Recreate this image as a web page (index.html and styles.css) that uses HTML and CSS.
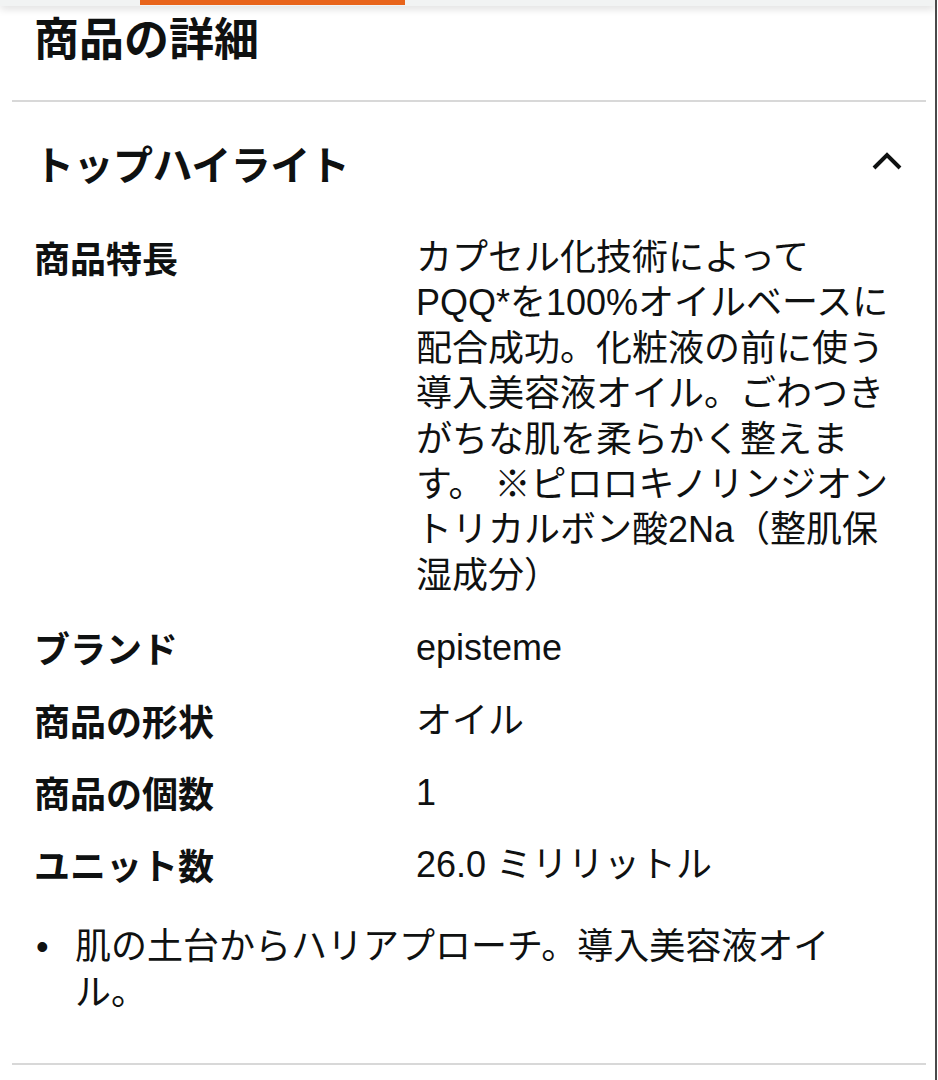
FILE: index.html
```html
<!DOCTYPE html>
<html lang="ja">
<head>
<meta charset="utf-8">
<title>商品の詳細</title>
<link rel="stylesheet" href="styles.css">
</head>
<body>
<div class="frame">
  <div class="topbar"><div class="tab"></div></div>
  <h1 class="title">商品の詳細</h1>
  <div class="divider"></div>
  <div class="section-head">
    <h2 class="section-title">トップハイライト</h2>
    <svg class="chevron" width="32" height="22" viewBox="0 0 32 22"><path d="M3 19 L16 6 L29 19" fill="none" stroke="#0f1111" stroke-width="4"/></svg>
  </div>
  <div class="specs">
    <div class="row">
      <div class="label">商品特長</div>
      <div class="value">カプセル化技術によってPQQ*を100%オイルベースに配合成功。化粧液の前に使う導入美容液オイル。ごわつきがちな肌を柔らかく整えます。 ※ピロロキノリンジオントリカルボン酸2Na（整肌保湿成分）</div>
    </div>
    <div class="row">
      <div class="label">ブランド</div>
      <div class="value">episteme</div>
    </div>
    <div class="row">
      <div class="label">商品の形状</div>
      <div class="value">オイル</div>
    </div>
    <div class="row">
      <div class="label">商品の個数</div>
      <div class="value">1</div>
    </div>
    <div class="row">
      <div class="label">ユニット数</div>
      <div class="value">26.0 ミリリットル</div>
    </div>
  </div>
  <ul class="bullets">
    <li>肌の土台からハリアプローチ。導入美容液オイル。</li>
  </ul>
  <div class="divider bottom"></div>
</div>
</body>
</html>
```
FILE: styles.css
```css
html, body {
  margin: 0;
  padding: 0;
  background: #ffffff;
}
.frame {
  width: 935px;
  min-height: 1080px;
  border-right: 2px solid #4a4a4a;
  color: #0f1111;
  font-family: "Liberation Sans", "Noto Sans CJK JP", sans-serif;
  overflow: hidden;
}
.topbar {
  height: 6px;
  background: #f1f3f3;
  box-shadow: 0 2px 8px rgba(0, 0, 0, 0.18);
  position: relative;
}
.tab {
  margin-left: 140px;
  width: 265px;
  height: 5px;
  background: #e8641b;
}
.title {
  margin: 4px 0 0 34px;
  font-family: "Noto Sans CJK JP", sans-serif;
  font-weight: 700;
  font-size: 45px;
  line-height: 54px;
}
.divider {
  margin: 36px 0 0 12px;
  width: 914px;
  height: 2px;
  background: #d8d8d8;
}
.section-head {
  margin-top: 36px;
  padding: 0 32px 0 34px;
  display: flex;
  justify-content: space-between;
  align-items: center;
  height: 50px;
}
.section-title {
  margin: 0;
  font-family: "Noto Sans CJK JP", sans-serif;
  font-weight: 700;
  font-size: 40px;
  letter-spacing: -0.5px;
  line-height: 50px;
}
.chevron {
  display: block;
  margin-top: -6px;
}
.specs {
  margin-top: 47px;
  padding-left: 34px;
  display: flex;
  flex-direction: column;
  gap: 27px;
}
.row {
  display: flex;
}
.label {
  width: 382px;
  flex: none;
  font-family: "Noto Sans CJK JP", sans-serif;
  font-weight: 700;
  font-size: 36px;
  line-height: 45px;
}
.value {
  width: 481px;
  font-size: 36px;
  line-height: 45.4px;
}
.bullets {
  margin: 36px 0 0 0;
  padding: 0 40px 0 75px;
  font-size: 36px;
  line-height: 46px;
}
.bullets li {
  list-style: none;
}
.bullets li::before {
  content: "•";
  display: inline-block;
  width: 39px;
  margin-left: -39px;
}
.divider.bottom {
  margin-top: 47px;
}
```
